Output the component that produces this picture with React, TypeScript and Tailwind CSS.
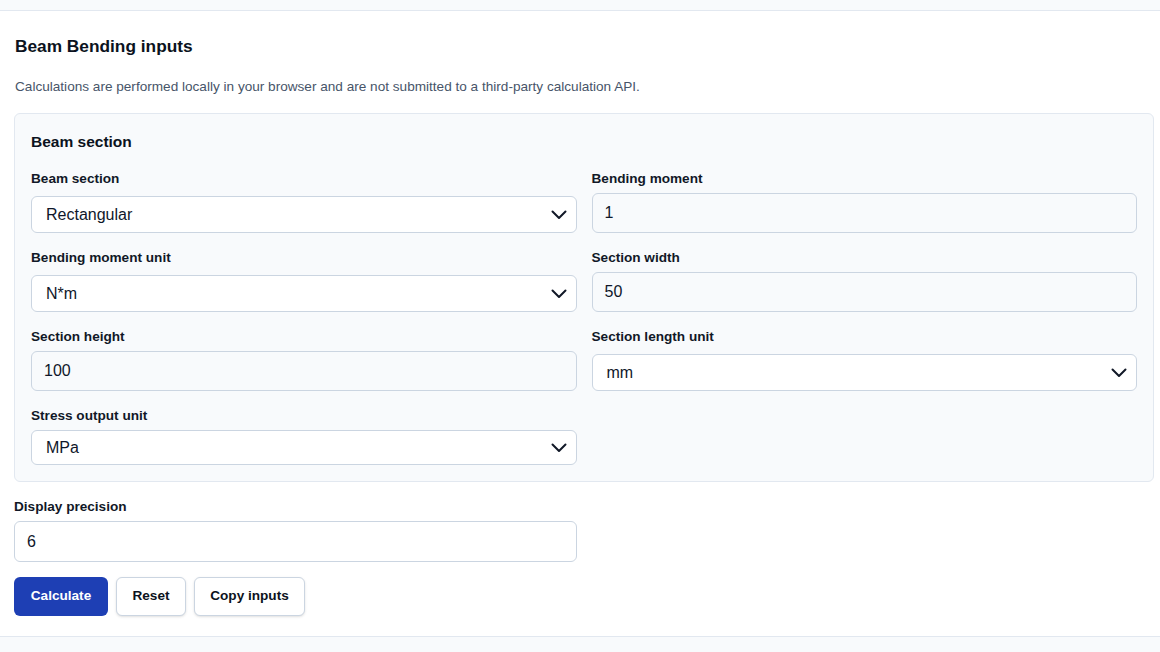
import type { JSX } from "react";

const font = { fontFamily: '"Liberation Sans", Arial, sans-serif' };

function Chevron(): JSX.Element {
  return (
    <svg
      className="absolute right-[9px] top-1/2 -translate-y-1/2"
      width="16"
      height="10"
      viewBox="0 0 16 10"
      fill="none"
    >
      <path d="M1.5 1.5 L8 8 L14.5 1.5" stroke="#111827" strokeWidth="2" strokeLinecap="round" strokeLinejoin="round" />
    </svg>
  );
}

type FieldProps = { label: string; value: string; kind: "select" | "input"; last?: boolean };

function Field({ label, value, kind, last }: FieldProps): JSX.Element {
  return (
    <div className="flex flex-col">
      <span className="text-[13.6px] leading-4 font-bold text-[#111827]">{label}</span>
      {kind === "select" ? (
        <div
          className={`relative flex items-center rounded-md border border-[#cbd5e1] bg-white pl-[14px] text-[16px] text-[#0f172a] ${last ? "mt-[6px] h-[35px]" : "mt-[9px] h-[37px]"}`}
        >
          {value}
          <Chevron />
        </div>
      ) : (
        <div className="mt-[6px] flex h-10 items-center rounded-md border border-[#cbd5e1] bg-[#f8fafc] px-3 text-[16px] text-[#0f172a]">
          {value}
        </div>
      )}
    </div>
  );
}

export default function App(): JSX.Element {
  return (
    <div className="min-h-screen bg-[#f8fafc]" style={font}>
      <div className="h-[11px] border-b border-[#e2e8f0] bg-[#f8fafc]" />
      <section className="border-b border-[#e2e8f0] bg-white pt-[23px] pr-[6px] pb-5 pl-[14px]">
        <h2 className="pl-px text-[17.3px] leading-6 font-bold text-[#0b1220]">Beam Bending inputs</h2>
        <p className="mt-[19px] pl-px text-[13.6px] leading-5 text-[#475569]">
          Calculations are performed locally in your browser and are not submitted to a third-party calculation API.
        </p>
        <div className="mt-[16px] rounded-md border border-[#e2e8f0] bg-[#f8fafc] p-4">
          <h3 className="text-[15.5px] leading-6 font-bold text-[#0b1220]">Beam section</h3>
          <div className="mt-[17px] grid grid-cols-2 gap-x-[15px] gap-y-[17px]">
            <Field label="Beam section" value="Rectangular" kind="select" />
            <Field label="Bending moment" value="1" kind="input" />
            <Field label="Bending moment unit" value="N*m" kind="select" />
            <Field label="Section width" value="50" kind="input" />
            <Field label="Section height" value="100" kind="input" />
            <Field label="Section length unit" value="mm" kind="select" />
            <Field label="Stress output unit" value="MPa" kind="select" last />
          </div>
        </div>
        <div className="mt-[17px] flex w-[563px] flex-col">
          <span className="text-[13.6px] leading-4 font-bold text-[#111827]">Display precision</span>
          <div className="mt-[6px] flex h-[41px] items-center rounded-md border border-[#cbd5e1] bg-white px-3 text-[16px] text-[#0f172a]">
            6
          </div>
        </div>
        <div className="mt-[15px] flex gap-2">
          <button className="h-[39px] w-[94px] rounded-md bg-[#1e3fb4] text-[13.6px] font-bold text-white">
            Calculate
          </button>
          <button className="h-[39px] w-[70px] rounded-md border border-[#cbd5e1] bg-white text-[13.6px] font-bold text-[#0b1220] shadow-sm">
            Reset
          </button>
          <button className="h-[39px] w-[111px] rounded-md border border-[#cbd5e1] bg-white text-[13.6px] font-bold text-[#0b1220] shadow-sm">
            Copy inputs
          </button>
        </div>
      </section>
    </div>
  );
}
